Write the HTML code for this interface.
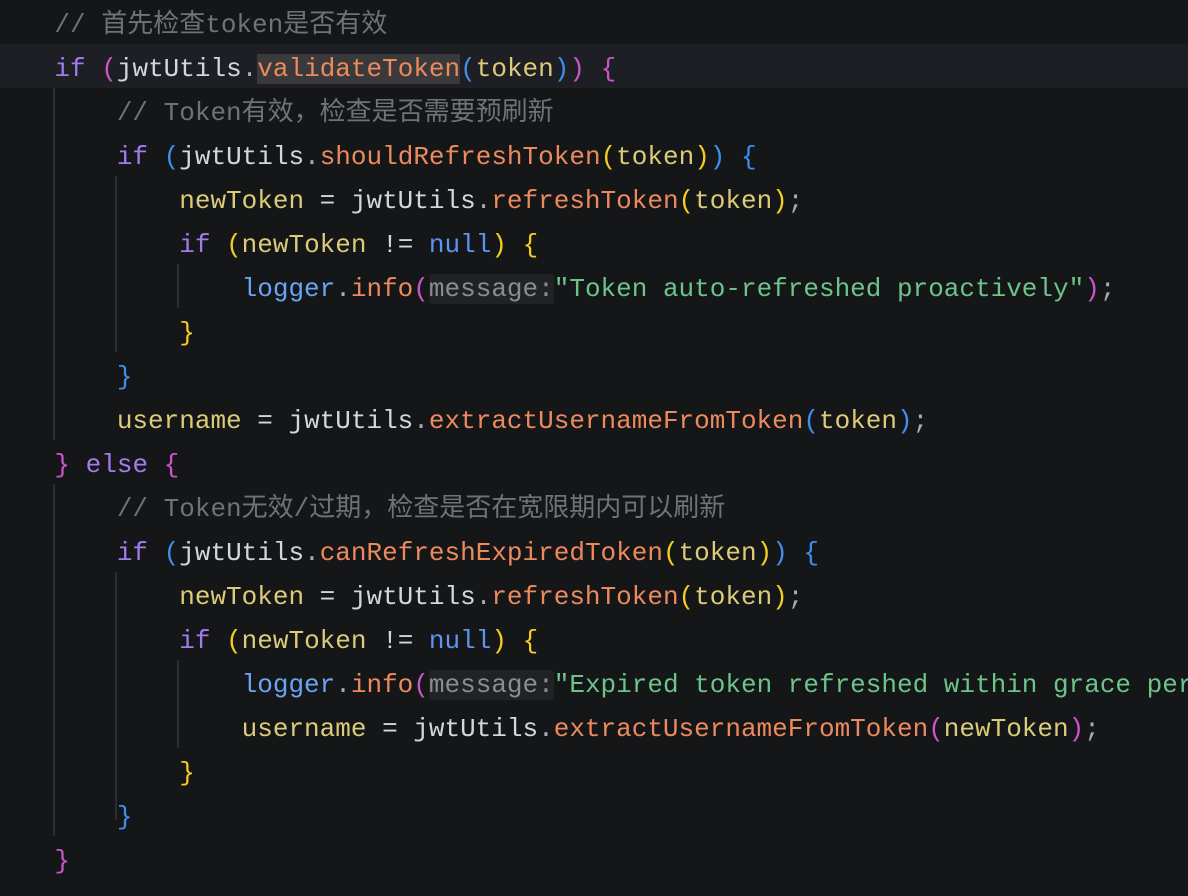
<!DOCTYPE html>
<html><head><meta charset="utf-8"><style>
html,body{margin:0;padding:0;background:#151618;width:1188px;height:896px;overflow:hidden}
.c{position:relative;font-family:"Liberation Mono","Noto Sans CJK SC",monospace;font-size:26px;color:#d4d6dc;width:1188px;overflow:hidden;height:896px}
.l{height:44px;line-height:50px;position:relative;white-space:pre;margin-left:-8px}
.hl{background:#1d1f24}
.g{position:absolute;width:2px;background:#2c2d31;z-index:1}
.k{color:#a37bec}.cm{color:#6e7279}.m{color:#ec8a5e}.v{color:#dccb78}.s{color:#6cc48a}.n{color:#5b95f2}.lg{color:#6aa4f4}
.p1{color:#cc55cc}.p2{color:#3e8ff0}.p3{color:#f5cc20}.d{color:#a8abb2}
.sel{background:#3a3a3c}.hint{background:#212224;color:#8a8c90;border-radius:3px}
</style></head><body><div class="c"><div class="g" style="left:53px;top:88px;height:352px"></div><div class="g" style="left:115px;top:176px;height:176px"></div><div class="g" style="left:177px;top:264px;height:44px"></div><div class="g" style="left:53px;top:484px;height:352px"></div><div class="g" style="left:115px;top:572px;height:248px"></div><div class="g" style="left:177px;top:660px;height:88px"></div><div class="l">    <span class="cm">// 首先检查token是否有效</span></div><div class="l hl" style="margin-left:0"><span style="margin-left:-8px">    </span><span class="k">if</span> <span class="p1">(</span>jwtUtils<span class="d">.</span><span class="m sel">validateToken</span><span class="p2">(</span><span class="v">token</span><span class="p2">)</span><span class="p1">)</span> <span class="p1">{</span></div><div class="l">        <span class="cm">// Token有效，检查是否需要预刷新</span></div><div class="l">        <span class="k">if</span> <span class="p2">(</span>jwtUtils<span class="d">.</span><span class="m">shouldRefreshToken</span><span class="p3">(</span><span class="v">token</span><span class="p3">)</span><span class="p2">)</span> <span class="p2">{</span></div><div class="l">            <span class="v">newToken</span> = jwtUtils<span class="d">.</span><span class="m">refreshToken</span><span class="p3">(</span><span class="v">token</span><span class="p3">)</span><span class="d">;</span></div><div class="l">            <span class="k">if</span> <span class="p3">(</span><span class="v">newToken</span> != <span class="n">null</span><span class="p3">)</span> <span class="p3">{</span></div><div class="l">                <span class="lg">logger</span><span class="d">.</span><span class="m">info</span><span class="p1">(</span><span class="hint">message:</span><span class="s">"Token auto-refreshed proactively"</span><span class="p1">)</span><span class="d">;</span></div><div class="l">            <span class="p3">}</span></div><div class="l">        <span class="p2">}</span></div><div class="l">        <span class="v">username</span> = jwtUtils<span class="d">.</span><span class="m">extractUsernameFromToken</span><span class="p2">(</span><span class="v">token</span><span class="p2">)</span><span class="d">;</span></div><div class="l">    <span class="p1">}</span> <span class="k">else</span> <span class="p1">{</span></div><div class="l">        <span class="cm">// Token无效/过期，检查是否在宽限期内可以刷新</span></div><div class="l">        <span class="k">if</span> <span class="p2">(</span>jwtUtils<span class="d">.</span><span class="m">canRefreshExpiredToken</span><span class="p3">(</span><span class="v">token</span><span class="p3">)</span><span class="p2">)</span> <span class="p2">{</span></div><div class="l">            <span class="v">newToken</span> = jwtUtils<span class="d">.</span><span class="m">refreshToken</span><span class="p3">(</span><span class="v">token</span><span class="p3">)</span><span class="d">;</span></div><div class="l">            <span class="k">if</span> <span class="p3">(</span><span class="v">newToken</span> != <span class="n">null</span><span class="p3">)</span> <span class="p3">{</span></div><div class="l">                <span class="lg">logger</span><span class="d">.</span><span class="m">info</span><span class="p1">(</span><span class="hint">message:</span><span class="s">"Expired token refreshed within grace period"</span><span class="p1">)</span><span class="d">;</span></div><div class="l">                <span class="v">username</span> = jwtUtils<span class="d">.</span><span class="m">extractUsernameFromToken</span><span class="p1">(</span><span class="v">newToken</span><span class="p1">)</span><span class="d">;</span></div><div class="l">            <span class="p3">}</span></div><div class="l">        <span class="p2">}</span></div><div class="l">    <span class="p1">}</span></div></div></body></html>
